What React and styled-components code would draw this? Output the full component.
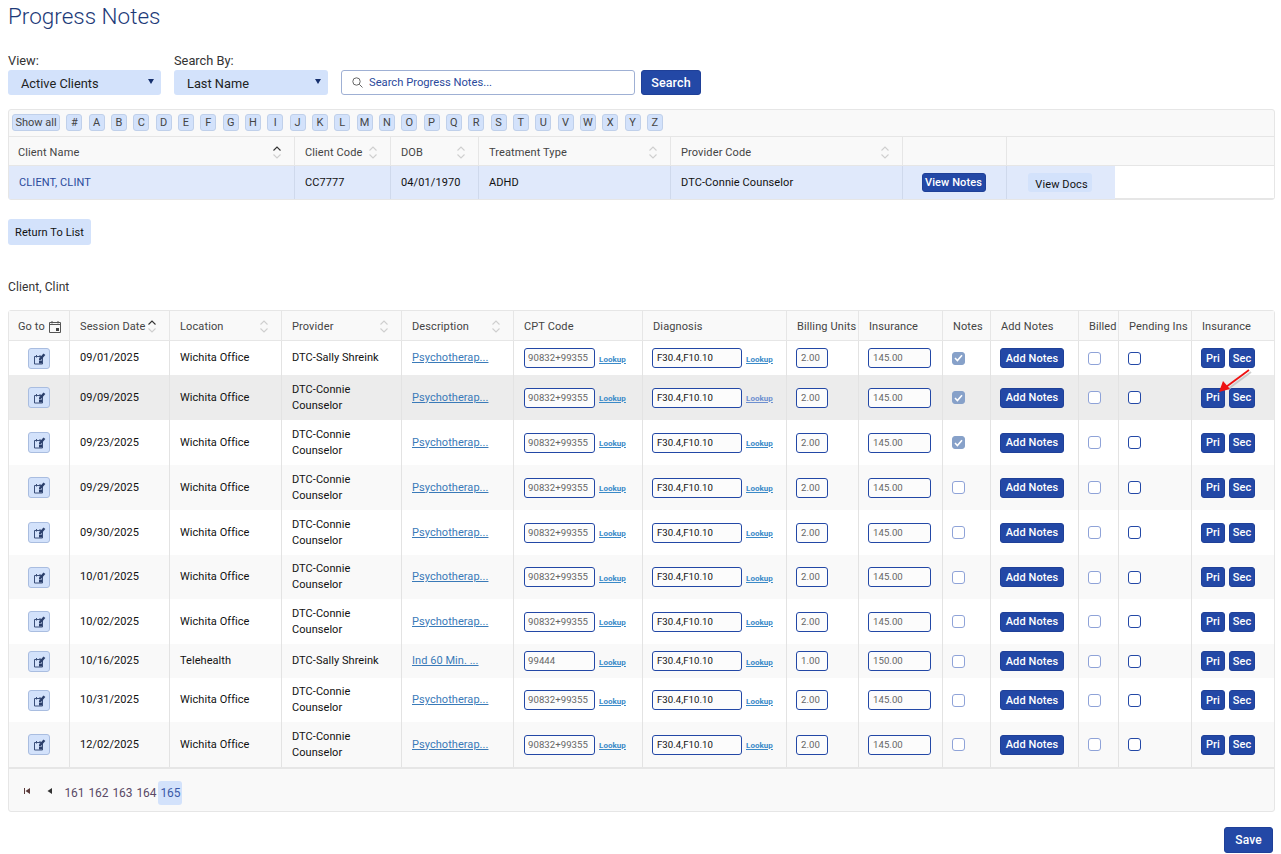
import React from 'react';
import styled, { createGlobalStyle } from 'styled-components';

const PRIMARY = '#2348a6';
const PALE = '#d3e2fb';
const LINE = '#e6e6e6';

const Global = createGlobalStyle`
  * { box-sizing: border-box; }
  body {
    margin: 0;
    background: #fff;
    font-family: Roboto, "Liberation Sans", sans-serif;
    color: #111;
  }
`;

const Page = styled.div`
  width: 1281px;
  height: 854px;
  padding: 0 6px 0 8px;
  overflow: hidden;
`;

const Title = styled.h1`
  margin: 0;
  padding-top: 3px;
  height: 53px;
  font-size: 22.5px;
  line-height: 27px;
  font-weight: 300;
  color: #1d3a78;
`;

const Filters = styled.div`
  display: flex;
  align-items: flex-end;
  height: 42px;
`;

const Field = styled.label`
  display: flex;
  flex-direction: column;
  width: ${p => p.$w}px;
  margin-right: 13px;
  font-size: 12.8px;
  line-height: 15px;
  color: #333;
`;

const Select = styled.div`
  position: relative;
  height: 25px;
  margin-top: 2px;
  padding-left: 13px;
  background: ${PALE};
  border-radius: 3px;
  font-size: 12.8px;
  line-height: 27px;
  color: #222;
  &::after {
    content: '';
    position: absolute;
    right: 7px;
    top: 9px;
    border-left: 3px solid transparent;
    border-right: 3px solid transparent;
    border-top: 5px solid #16306e;
  }
`;

const SearchBox = styled.div`
  display: flex;
  align-items: center;
  gap: 6px;
  width: 294px;
  height: 25px;
  padding: 0 0 1px 10px;
  border: 1px solid #9fb0d4;
  border-radius: 3px;
  font-size: 11.2px;
  color: #2b4a9c;
`;

const Button = styled.button`
  display: inline-flex;
  align-items: center;
  justify-content: center;
  flex: none;
  width: ${p => p.$w}px;
  height: ${p => p.$h || 20}px;
  margin: ${p => p.$m || 0};
  padding: 0;
  border: 1px solid ${p => (p.$pale ? 'transparent' : '#1f4098')};
  border-radius: 3px;
  background: ${p => (p.$pale ? PALE : PRIMARY)};
  color: ${p => (p.$pale ? '#111' : '#fff')};
  font: ${p => (p.$pale ? 400 : 500)} ${p => p.$fs || 11}px Roboto, sans-serif;
  letter-spacing: 0.1px;
`;

const GoButton = styled(Button)`
  border-color: #a9bde0;
`;

const DocsButton = styled(Button)`
  padding: 3px 0 0 4px;
`;

const Panel = styled.div`
  margin-top: ${p => p.$mt}px;
  width: 1267px;
  border: 1px solid ${LINE};
  border-radius: 3px;
  background: #f9f9f9;
`;

const Alpha = styled.div`
  display: flex;
  align-items: center;
  gap: 6.33px;
  height: 27px;
  padding: 0 3px 2px;
  border-bottom: 1px solid ${LINE};
`;

const AlphaKey = styled.span`
  display: flex;
  align-items: center;
  justify-content: center;
  width: ${p => p.$w || 16}px;
  height: 17px;
  background: ${PALE};
  border: 1px solid #c0d0ea;
  border-radius: 3px;
  font-size: 11px;
  color: #444;
`;

const Table = styled.table`
  width: ${p => p.$w}px;
  table-layout: fixed;
  border-collapse: separate;
  border-spacing: 0;
`;

const Head = styled.th`
  height: ${p => p.$h}px;
  padding: 2px 12px 0 10px;
  background: #f9f9f9;
  border-right: 1px solid ${LINE};
  border-bottom: 1px solid ${LINE};
  font-size: 11px;
  font-weight: 400;
  letter-spacing: 0.12px;
  color: #444;
  text-align: left;
  white-space: nowrap;
  &:first-child { padding-left: 9px; }
  &:last-child { border-right: 0; }
`;

const HeadInner = styled.div`
  display: flex;
  align-items: center;
  justify-content: ${p => (p.$gap ? 'flex-start' : 'space-between')};
  gap: ${p => p.$gap || 0}px;
`;

const Cell = styled.td`
  position: relative;
  padding: 6px 10px;
  border-right: 1px solid #e3e3e3;
  font-size: 11px;
  line-height: 16px;
  letter-spacing: 0.05px;
  color: #111;
  &:nth-child(n + 7) { padding-left: 9px; }
  &:last-child { border-right: 0; }
`;

const Row = styled.tr`
  background: ${p => p.$bg};
  td { height: ${p => p.$h}px; }
`;

const ClientCell = styled.td`
  height: 33px;
  padding: 0 ${p => (p.$action ? 11 : 10)}px 0 ${p => (p.$action ? 9 : 10)}px;
  background: #e0e9fb;
  border-right: 1px solid ${p => (p.$end ? 'transparent' : '#cfd9ec')};
  font-size: 11px;
  letter-spacing: 0.1px;
  color: #111;
`;

const EmptyCell = styled.td`
  background: #fff;
  border-bottom: 1px solid ${LINE};
`;

const ClientLink = styled.a`
  color: #2b4a9c;
`;

const DescLink = styled.a`
  color: #3a7ab8;
  text-decoration: underline;
  white-space: nowrap;
`;

const Flow = styled.div`
  display: flex;
  align-items: center;
  justify-content: ${p => (p.$center ? 'center' : 'flex-start')};
  gap: ${p => p.$gap || 0}px;
`;

const Input = styled.div`
  flex: none;
  width: ${p => p.$w}px;
  height: 20px;
  padding-left: ${p => p.$pl || 4}px;
  border: 1px solid ${PRIMARY};
  border-radius: 3px;
  background: #fcfcfc;
  font-size: 9.6px;
  line-height: 18px;
  color: ${p => (p.$dark ? '#111' : '#666')};
`;

const Lookup = styled.a`
  margin: 3px 0 0 4px;
  font-size: 8px;
  font-weight: 700;
  color: ${p => (p.$visited ? '#6c8fd0' : '#3a8ac8')};
  text-decoration: underline;
`;

const Box = styled.span`
  display: flex;
  align-items: center;
  justify-content: center;
  width: 13px;
  height: 13px;
  border-radius: 3px;
  border: 1px solid ${p => (p.$checked ? '#87a1c9' : p.$dark ? PRIMARY : '#8fa3d8')};
  background: ${p => (p.$checked ? '#87a1c9' : '#fff')};
`;

const Arrow = styled.svg`
  position: absolute;
  left: 22px;
  top: -10px;
  pointer-events: none;
`;

const Caption = styled.div`
  height: 65px;
  padding-top: 35px;
  font-size: 12px;
  line-height: 14px;
  letter-spacing: 0.1px;
  color: #333;
`;

const Pager = styled.div`
  display: flex;
  align-items: center;
  height: 44px;
  padding: 5px 0 0 13px;
  border-top: 2px solid ${LINE};
`;

const PageNum = styled.span`
  display: flex;
  align-items: center;
  justify-content: center;
  width: 24px;
  height: 24px;
  padding-left: 1px;
  border-radius: 3px;
  font-size: 12px;
  background: ${p => (p.$on ? PALE : 'transparent')};
  color: ${p => (p.$on ? '#3a5aa8' : '#5a4a66')};
`;

const PageIcon = styled.svg`
  width: 10px;
  height: 10px;
  margin: -3px ${p => p.$mr}px 0 0;
`;

const Footer = styled.div`
  display: flex;
  justify-content: flex-end;
  padding: 15px 2px 0 0;
`;

const Glyph = styled.svg`
  flex: none;
`;

const Sort = ({ active }) => (
  <Glyph width="10" height="15" viewBox="0 0 10 15" fill="none" strokeWidth="1.1">
    <path d="M1.5 5.5 5 2l3.5 3.5" stroke={active ? '#333' : '#cfcfcf'} />
    <path d="M1.5 9.5 5 13l3.5-3.5" stroke="#cfcfcf" />
  </Glyph>
);

const Calendar = () => (
  <Glyph width="12" height="12" viewBox="0 0 12 12" fill="none">
    <path d="M.5 1.5h11v10H.5z" stroke="#555" />
    <path d="M.5 3.5h11" stroke="#555" />
    <path d="M3 0v2.5M9 0v2.5" stroke="#555" />
    <path d="M7 7h3v3H7z" fill="#444" />
  </Glyph>
);

const GoIcon = () => (
  <Glyph width="13" height="13" viewBox="0 0 13 13" fill="none">
    <path d="M1.5 4.5h8v7.5h-8z" stroke="#3a4f7a" />
    <path d="M3.5 3v2.5M7 3v2.5" stroke="#3a4f7a" />
    <path d="M6 8.5h3v3H6z" fill="#2b3f6b" />
    <path d="M6 6.5 10.5 1.5l1.8 1.6L8 8H6z" fill="#2b3f6b" />
  </Glyph>
);

const Check = () => (
  <svg width="9" height="8" viewBox="0 0 9 8" fill="none">
    <path d="M1 4l2.4 2.5L8 1.2" stroke="#fff" strokeWidth="1.6" />
  </svg>
);

const clientHeads = ['Client Name', 'Client Code', 'DOB', 'Treatment Type', 'Provider Code', ''];
const clientWidths = [286, 96, 88, 192, 232, 104, 108, 159];

const noteHeads = [
  ['Go to'], ['Session Date', true], ['Location', false], ['Provider', false], ['Description', false],
  ['CPT Code'], ['Diagnosis'], ['Billing Units'], ['Insurance'], ['Notes'], ['Add Notes'],
  ['Billed'], ['Pending Ins'], ['Insurance'],
];
const noteWidths = [61, 100, 112, 120, 112, 129, 144, 72, 84, 48, 88, 40, 73, 82];

const SALLY = 'DTC-Sally Shreink';
const CONNIE = 'DTC-Connie Counselor';
const rows = [
  { date: '09/01/2025', provider: SALLY, notes: true, h: 34 },
  { date: '09/09/2025', provider: CONNIE, notes: true, hover: true, h: 45 },
  { date: '09/23/2025', provider: CONNIE, notes: true, h: 45 },
  { date: '09/29/2025', provider: CONNIE, h: 45 },
  { date: '09/30/2025', provider: CONNIE, h: 45 },
  { date: '10/01/2025', provider: CONNIE, h: 44 },
  { date: '10/02/2025', provider: CONNIE, h: 45 },
  { date: '10/16/2025', provider: SALLY, tele: true, h: 34 },
  { date: '10/31/2025', provider: CONNIE, h: 44 },
  { date: '12/02/2025', provider: CONNIE, h: 45 },
];

const rowColor = (r, i) => (r.hover ? '#ececec' : i % 2 ? '#f9f9f9' : '#fff');

export default function App() {
  return (
    <Page>
      <Global />
      <Title>Progress Notes</Title>
      <Filters>
        <Field $w={153}>View:<Select>Active Clients</Select></Field>
        <Field $w={154}>Search By:<Select>Last Name</Select></Field>
        <SearchBox>
          <svg width="11" height="11" viewBox="0 0 11 11" fill="none" stroke="#666">
            <circle cx="4.5" cy="4.5" r="3.7" />
            <path d="M7.3 7.3 10.5 10.5" />
          </svg>
          Search Progress Notes...
        </SearchBox>
        <Button $w={60} $h={25} $fs={12.5} $m="0 0 0 6px">Search</Button>
      </Filters>

      <Panel $mt={14}>
        <Alpha>
          <AlphaKey $w={48}>Show all</AlphaKey>
          {'#ABCDEFGHIJKLMNOPQRSTUVWXYZ'.split('').map(c => <AlphaKey key={c}>{c}</AlphaKey>)}
        </Alpha>
        <Table $w={1265}>
          <colgroup>{clientWidths.map((w, i) => <col key={i} width={w} />)}</colgroup>
          <thead>
            <tr>
              {clientHeads.map((h, i) => (
                <Head key={i} $h={29}>
                  <HeadInner>{h}{h && <Sort active={i === 0} />}</HeadInner>
                </Head>
              ))}
              <Head $h={29} colSpan={2} />
            </tr>
          </thead>
          <tbody>
            <tr>
              <ClientCell><ClientLink>CLIENT, CLINT</ClientLink></ClientCell>
              <ClientCell>CC7777</ClientCell>
              <ClientCell>04/01/1970</ClientCell>
              <ClientCell>ADHD</ClientCell>
              <ClientCell>DTC-Connie Counselor</ClientCell>
              <ClientCell $action><Flow $center><Button $w={64} $h={19}>View Notes</Button></Flow></ClientCell>
              <ClientCell $action $end><Flow $center><DocsButton $pale $w={64} $h={19}>View Docs</DocsButton></Flow></ClientCell>
              <EmptyCell />
            </tr>
          </tbody>
        </Table>
      </Panel>

      <Button $pale $w={83} $h={26} $m="19px 0 0 0">Return To List</Button>

      <Caption>Client, Clint</Caption>

      <Panel $mt={0}>
        <Table $w={1265}>
          <colgroup>{noteWidths.map((w, i) => <col key={i} width={w} />)}</colgroup>
          <thead>
            <tr>
              {noteHeads.map(([h, sort], i) => (
                <Head key={i} $h={30}>
                  <HeadInner $gap={i === 0 ? 4 : sort ? 1 : 0}>
                    {h}
                    {i === 0 && <Calendar />}
                    {sort !== undefined && <Sort active={sort} />}
                  </HeadInner>
                </Head>
              ))}
            </tr>
          </thead>
          <tbody>
            {rows.map((r, i) => (
              <Row key={r.date} $bg={rowColor(r, i)} $h={r.h}>
                <Cell>
                  <Flow $center>
                    <GoButton $pale $w={22} $h={21}><GoIcon /></GoButton>
                  </Flow>
                </Cell>
                <Cell>{r.date}</Cell>
                <Cell>{r.tele ? 'Telehealth' : 'Wichita Office'}</Cell>
                <Cell>{r.provider}</Cell>
                <Cell><DescLink>{r.tele ? 'Ind 60 Min. ...' : 'Psychotherap...'}</DescLink></Cell>
                <Cell>
                  <Flow>
                    <Input $w={71} $pl={3}>{r.tele ? '99444' : '90832+99355'}</Input>
                    <Lookup>Lookup</Lookup>
                  </Flow>
                </Cell>
                <Cell>
                  <Flow>
                    <Input $w={90} $dark>F30.4,F10.10</Input>
                    <Lookup $visited={r.hover}>Lookup</Lookup>
                  </Flow>
                </Cell>
                <Cell><Input $w={32}>{r.tele ? '1.00' : '2.00'}</Input></Cell>
                <Cell><Input $w={63}>{r.tele ? '150.00' : '145.00'}</Input></Cell>
                <Cell><Box $checked={r.notes}>{r.notes && <Check />}</Box></Cell>
                <Cell><Button $w={64}>Add Notes</Button></Cell>
                <Cell><Box /></Cell>
                <Cell><Box $dark /></Cell>
                <Cell>
                  <Flow $gap={4}>
                    <Button $w={24}>Pri</Button>
                    <Button $w={26}>Sec</Button>
                  </Flow>
                  {r.hover && (
                    <Arrow width="40" height="34" viewBox="0 0 40 34" fill="none">
                      <path d="M37 7 14 24" stroke="#bbb" strokeWidth="2" opacity=".7" />
                      <path d="M35 5 12 22" stroke="#ee1111" strokeWidth="1.8" />
                      <path d="M5 27 9 16l7 8z" fill="#ee1111" />
                    </Arrow>
                  )}
                </Cell>
              </Row>
            ))}
          </tbody>
        </Table>
        <Pager>
          <PageIcon $mr={13} viewBox="0 0 10 10"><path d="M2 2h1v6H2zM8 2v6L3.5 5z" fill="#5a3a3a" /></PageIcon>
          <PageIcon $mr={7} viewBox="0 0 10 10"><path d="M7 2v6L2.5 5z" fill="#333" /></PageIcon>
          <PageNum>161</PageNum>
          <PageNum>162</PageNum>
          <PageNum>163</PageNum>
          <PageNum>164</PageNum>
          <PageNum $on>165</PageNum>
        </Pager>
      </Panel>

      <Footer><Button $w={49} $h={26} $fs={12}>Save</Button></Footer>
    </Page>
  );
}
